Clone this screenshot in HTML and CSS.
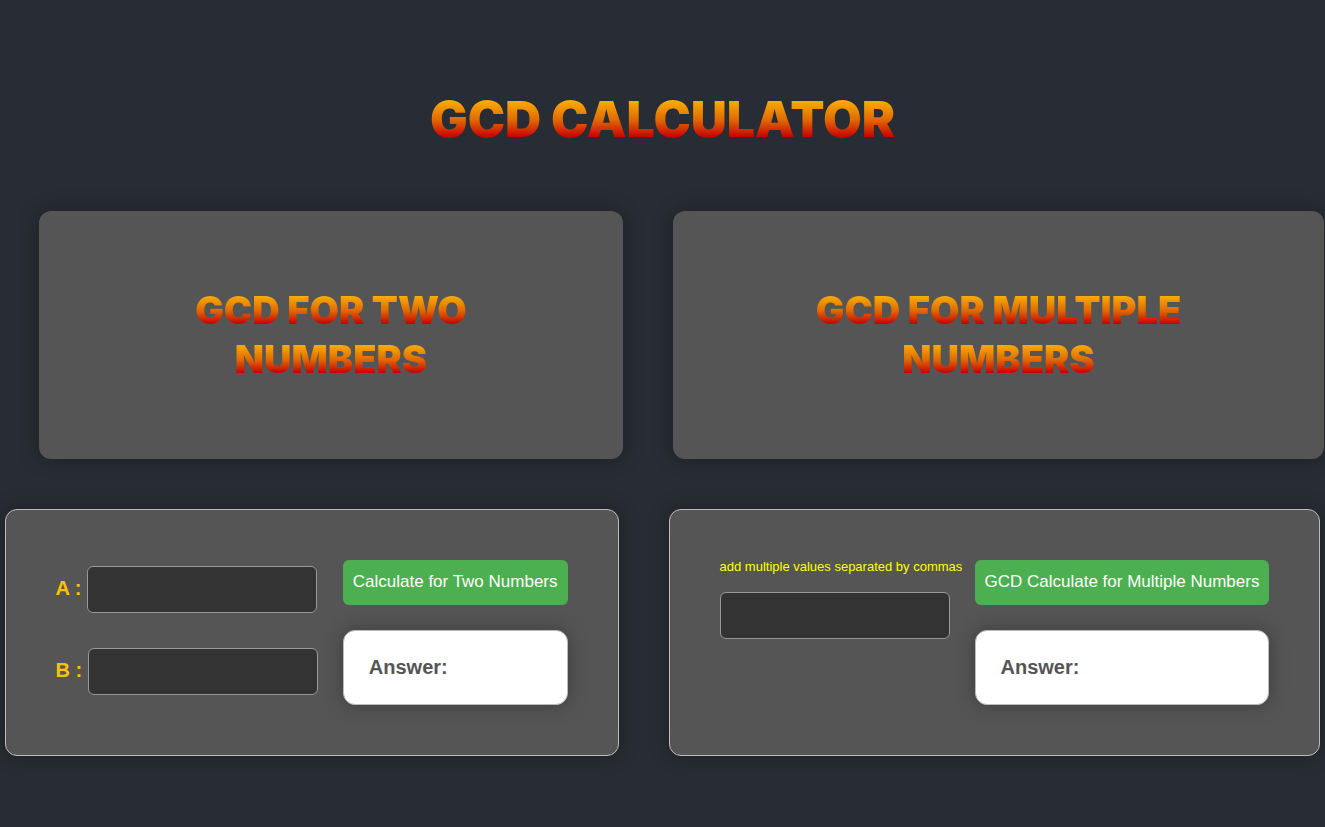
FILE: index.html
```html
<!DOCTYPE html>
<html lang="en">
<head>
<meta charset="utf-8">
<meta name="viewport" content="width=device-width, initial-scale=1">
<title>GCD Calculator</title>
<link rel="stylesheet" href="styles.css">
</head>
<body>
<header class="header">
  <h1 class="title"><span class="flame">GCD CALCULATOR</span></h1>
</header>
<main>
  <div class="banners">
    <section class="banner"><h2 class="subtitle"><span class="flame">GCD FOR TWO<br>NUMBERS</span></h2></section>
    <section class="banner"><h2 class="subtitle"><span class="flame">GCD FOR MULTIPLE<br>NUMBERS</span></h2></section>
  </div>
  <div class="panels">
    <form class="panel">
      <div class="fields">
        <div class="field"><label class="label" for="a">A :</label> <input class="input" id="a" type="text"></div>
        <div class="field"><label class="label" for="b">B :</label> <input class="input" id="b" type="text"></div>
      </div>
      <div class="result">
        <button class="button" type="button">Calculate for Two Numbers</button>
        <div class="answer">Answer:</div>
      </div>
    </form>
    <form class="panel">
      <div class="list">
        <label class="hint" for="values">add multiple values separated by commas</label>
        <input class="input" id="values" type="text">
      </div>
      <div class="result">
        <button class="button" type="button">GCD Calculate for Multiple Numbers</button>
        <div class="answer">Answer:</div>
      </div>
    </form>
  </div>
</main>
</body>
</html>
```
FILE: styles.css
```css
* {
  box-sizing: border-box;
}

body {
  margin: 0;
  background: #282c34;
  color: #555;
  font-family: "Liberation Sans", Arial, sans-serif;
}

.header {
  padding: 89px 20px 62px;
  text-align: center;
}

.title,
.subtitle {
  margin: 0;
  font-family: Inter, "Liberation Sans", sans-serif;
  font-weight: 900;
  text-align: center;
}

.title {
  font-size: 50px;
  line-height: 60px;
}

.subtitle {
  font-size: 38px;
  line-height: 49px;
}

.flame {
  background: linear-gradient(#f8ac00 20%, #e06800 52%, #c80000 80%);
  -webkit-background-clip: text;
  background-clip: text;
  -webkit-box-decoration-break: clone;
  box-decoration-break: clone;
  color: transparent;
}

.banners {
  display: grid;
  grid-template-columns: 584fr 651fr;
  gap: 50px;
  padding: 0 1px 0 39px;
}

.banner {
  padding: 75px 50px;
  border-radius: 12px;
  background: #555;
  box-shadow: 0 0 20px rgba(0, 0, 0, 0.3);
}

.panels {
  display: flex;
  justify-content: center;
  gap: 50px;
  padding: 50px 0;
}

.panel {
  display: flex;
  gap: 25px;
  padding: 50px;
  border: 1px solid #bbb;
  border-radius: 12px;
  background: #555;
  box-shadow: 0 0 20px rgba(0, 0, 0, 0.3);
}

.fields {
  display: flex;
  flex-direction: column;
  gap: 35px;
  padding-top: 6px;
}

.field {
  height: 47px;
  font-size: 20px;
  line-height: 45px;
  white-space: nowrap;
}

.label {
  color: #ffc107;
  font-weight: bold;
}

.input {
  width: 230px;
  height: 47px;
  padding: 12px;
  border: 1px solid #999;
  border-radius: 6px;
  background: #333;
  color: #fff;
  font: inherit;
  vertical-align: top;
}

.list {
  display: flex;
  flex-direction: column;
  gap: 18px;
  width: 230px;
}

.hint {
  color: #ff0;
  font-size: 13px;
  line-height: 14px;
  white-space: nowrap;
}

.result {
  display: flex;
  flex-direction: column;
  gap: 25px;
}

.button {
  padding: 12px 10px 13px;
  border: 0;
  border-radius: 6px;
  background: #4caf50;
  color: #fff;
  font-family: inherit;
  font-size: 17px;
  line-height: 20px;
}

.answer {
  padding: 24px 25px;
  border: 1px solid #bbb;
  border-radius: 12px;
  background: #fff;
  box-shadow: 0 0 20px rgba(0, 0, 0, 0.3);
  font-size: 20px;
  font-weight: bold;
  line-height: 25px;
}
```
